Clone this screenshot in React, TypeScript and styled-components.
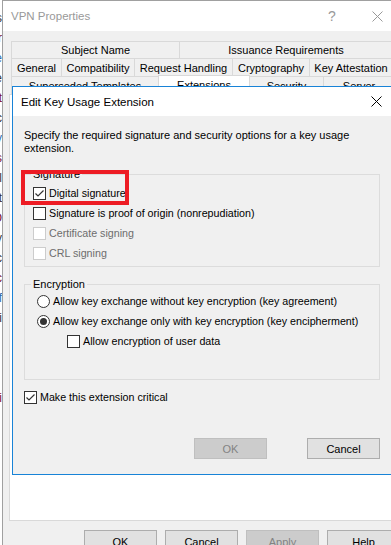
import styled, { createGlobalStyle } from "styled-components";

const GlobalStyle = createGlobalStyle`
    html, body {
        margin: 0;
        padding: 0;
        background: #ffffff;
    }
    body {
        font-family: "Liberation Sans", Arial, sans-serif;
        font-size: 11px;
        color: #000000;
    }
`;

const Screen = styled.div`
    display: flex;
    width: 391px;
    height: 545px;
    overflow: hidden;
`;

// what peeks out of the window behind
const BackStrip = styled.div`
    width: 2px;
    flex: none;
    overflow: hidden;
    direction: rtl;
    padding-top: 8px;
    line-height: 20px;
    font-size: 12px;
    span {
        display: block;
        white-space: nowrap;
    }
`;

const Window = styled.div`
    position: relative;
    flex: none;
    width: 400px;
    height: 570px;
    border-left: 1px solid #a0a0a0;
    border-top: 1px solid #a0a0a0;
    background: #f0f0f0;
    display: flex;
    flex-direction: column;
`;

const TitleBar = styled.div`
    height: 30px;
    background: #ffffff;
    display: flex;
    align-items: center;
    padding-left: 8px;
    font-size: 11.5px;
`;

const WindowTitle = styled.span<{ $active?: boolean }>`
    color: ${p => (p.$active ? "#000000" : "#999999")};
    flex: 1;
`;

const TitleButton = styled.span<{ $w: number }>`
    width: ${p => p.$w}px;
    display: flex;
    align-items: center;
    justify-content: center;
    color: #999999;
    font-size: 14px;
`;

const SheetBody = styled.div`
    padding: 10px 0 0 6px;
    display: flex;
    flex-direction: column;
`;

const TabRow = styled.div<{ $h: number }>`
    display: flex;
    height: ${p => p.$h}px;
    margin-left: 2px;
    align-items: flex-end;
`;

const Tab = styled.div<{ $w: number; $active?: boolean }>`
    box-sizing: border-box;
    width: ${p => p.$w}px;
    flex: none;
    height: ${p => (p.$active ? "calc(100% + 1px)" : "100%")};
    margin-left: -1px;
    border: 1px solid #d9d9d9;
    border-bottom: none;
    background: ${p => (p.$active ? "#ffffff" : "#f0f0f0")};
    display: flex;
    justify-content: center;
    align-items: center;
    white-space: nowrap;
    overflow: hidden;
    &:first-child {
        margin-left: 0;
    }
`;

const TabPage = styled.div`
    height: 427px;
    box-sizing: border-box;
    background: #ffffff;
    border: 1px solid #d9d9d9;
`;

const SheetButtons = styled.div`
    display: flex;
    gap: 8px;
    padding: 9px 0 0 75px;
`;

const Button = styled.button<{ $disabled?: boolean }>`
    width: 73px;
    height: 23px;
    flex: none;
    box-sizing: border-box;
    font: inherit;
    padding: 0;
    color: ${p => (p.$disabled ? "#838383" : "#000000")};
    background: ${p => (p.$disabled ? "#cccccc" : "#e1e1e1")};
    border: 1px solid ${p => (p.$disabled ? "#bfbfbf" : "#adadad")};
    border-radius: 0;
`;

// the modal that sits over the property sheet
const Dialog = styled.div`
    position: absolute;
    left: 9px;
    top: 85px;
    width: 382px;
    height: 387px;
    border: 1px solid #1883d7;
    background: #f0f0f0;
    display: flex;
    flex-direction: column;
`;

const DialogTitle = styled.div`
    height: 29px;
    flex: none;
    background: #ffffff;
    display: flex;
    align-items: center;
    padding-left: 8px;
    font-size: 11.5px;
`;

const DialogBody = styled.div`
    position: relative;
    padding: 13px 15px 0 11px;
    display: flex;
    flex-direction: column;
`;

const Description = styled.p`
    margin: 0;
    line-height: 13px;
    width: 340px;
`;

const GroupBox = styled.fieldset<{ $top: number; $bottom: number }>`
    margin: ${p => p.$top}px 0 0 0;
    padding: 0 0 ${p => p.$bottom}px 0;
    border: 1px solid #dcdcdc;
    min-width: 0;
`;

const Legend = styled.legend`
    margin-left: 6px;
    padding: 0 2px;
    line-height: 14px;
`;

const OptionRow = styled.label<{ $indent: number; $disabled?: boolean }>`
    display: flex;
    align-items: center;
    gap: 3px;
    height: 20px;
    padding-left: ${p => p.$indent}px;
    color: ${p => (p.$disabled ? "#6d6d6d" : "#000000")};
    white-space: nowrap;
    font-size: 10.7px;
`;

const Box = styled.span<{ $disabled?: boolean }>`
    width: 13px;
    height: 13px;
    box-sizing: border-box;
    flex: none;
    background: #ffffff;
    border: 1px solid ${p => (p.$disabled ? "#cccccc" : "#333333")};
    display: flex;
    align-items: center;
    justify-content: center;
`;

const Radio = styled.span<{ $checked?: boolean }>`
    width: 13px;
    height: 13px;
    box-sizing: border-box;
    flex: none;
    border-radius: 50%;
    background: #ffffff;
    border: 1px solid #333333;
    display: flex;
    align-items: center;
    justify-content: center;
    &::after {
        content: "";
        width: 7px;
        height: 7px;
        border-radius: 50%;
        background: ${p => (p.$checked ? "#333333" : "transparent")};
    }
`;

const DialogButtons = styled.div`
    display: flex;
    justify-content: flex-end;
    gap: 40px;
    margin-top: 31px;
    button {
        height: 21px;
    }
`;

const Highlight = styled.div`
    position: absolute;
    left: 8px;
    top: 54px;
    width: 108px;
    height: 35px;
    box-sizing: border-box;
    border: 4px solid #ed1c24;
    pointer-events: none;
`;

function CloseIcon({ color }: { color: string }) {
    return (
        <svg width="11" height="11" viewBox="0 0 11 11">
            <path d="M0.5 0.5 L10.5 10.5 M10.5 0.5 L0.5 10.5" stroke={color} strokeWidth="1" fill="none" />
        </svg>
    );
}

function CheckBox({ checked, disabled }: { checked?: boolean; disabled?: boolean }) {
    return (
        <Box $disabled={disabled}>
            {checked && (
                <svg width="11" height="11" viewBox="0 0 11 11">
                    <polyline points="1.5,5.5 4,8 9.5,2.5" stroke="#333333" strokeWidth="1.2" fill="none" />
                </svg>
            )}
        </Box>
    );
}

const backLetters = ["s", "r", "e", "e", "t", "c", "v", "s", "l", "t", "O", "v", "c", "c", "f", "i", "", "", "", "i"];

function App() {
    return (
        <Screen>
            <GlobalStyle />
            <BackStrip>
                {backLetters.map((l, i) => (
                    <span key={i} style={{ color: i % 3 === 1 ? "#7a1030" : i % 4 === 2 ? "#2b6cb0" : "#333" }}>
                        {l || "\u00a0"}
                    </span>
                ))}
            </BackStrip>
            <Window>
                <TitleBar>
                    <WindowTitle>VPN Properties</WindowTitle>
                    <TitleButton $w={38}>?</TitleButton>
                    <TitleButton $w={52}>
                        <CloseIcon color="#999999" />
                    </TitleButton>
                </TitleBar>
                <SheetBody>
                    <TabRow $h={17}>
                        <Tab $w={169}>Subject Name</Tab>
                        <Tab $w={214}>Issuance Requirements</Tab>
                    </TabRow>
                    <TabRow $h={18}>
                        <Tab $w={51}>General</Tab>
                        <Tab $w={74}>Compatibility</Tab>
                        <Tab $w={99}>Request Handling</Tab>
                        <Tab $w={78}>Cryptography</Tab>
                        <Tab $w={84}>Key Attestation</Tab>
                    </TabRow>
                    <TabRow $h={18}>
                        <Tab $w={148}>Superseded Templates</Tab>
                        <Tab $w={92} $active>Extensions</Tab>
                        <Tab $w={75}>Security</Tab>
                        <Tab $w={72}>Server</Tab>
                    </TabRow>
                    <TabPage />
                    <SheetButtons>
                        <Button>OK</Button>
                        <Button>Cancel</Button>
                        <Button $disabled>Apply</Button>
                        <Button>Help</Button>
                    </SheetButtons>
                </SheetBody>

                <Dialog>
                    <DialogTitle>
                        <WindowTitle $active>Edit Key Usage Extension</WindowTitle>
                        <TitleButton $w={38}>
                            <CloseIcon color="#000000" />
                        </TitleButton>
                    </DialogTitle>
                    <DialogBody>
                        <Description>
                            Specify the required signature and security options for a key usage extension.
                        </Description>

                        <GroupBox $top={12} $bottom={3}>
                            <Legend>Signature</Legend>
                            <div style={{ height: 2 }} />
                            <OptionRow $indent={8}>
                                <CheckBox checked />
                                Digital signature
                            </OptionRow>
                            <OptionRow $indent={8}>
                                <CheckBox />
                                Signature is proof of origin (nonrepudiation)
                            </OptionRow>
                            <OptionRow $indent={8} $disabled>
                                <CheckBox disabled />
                                Certificate signing
                            </OptionRow>
                            <OptionRow $indent={8} $disabled>
                                <CheckBox disabled />
                                CRL signing
                            </OptionRow>
                        </GroupBox>

                        <GroupBox $top={10} $bottom={28}>
                            <Legend>Encryption</Legend>
                            <OptionRow $indent={12}>
                                <Radio />
                                Allow key exchange without key encryption (key agreement)
                            </OptionRow>
                            <OptionRow $indent={12}>
                                <Radio $checked />
                                Allow key exchange only with key encryption (key encipherment)
                            </OptionRow>
                            <OptionRow $indent={42}>
                                <CheckBox />
                                Allow encryption of user data
                            </OptionRow>
                        </GroupBox>

                        <OptionRow $indent={0} style={{ marginTop: 7 }}>
                            <CheckBox checked />
                            Make this extension critical
                        </OptionRow>

                        <DialogButtons>
                            <Button $disabled>OK</Button>
                            <Button>Cancel</Button>
                        </DialogButtons>

                        <Highlight />
                    </DialogBody>
                </Dialog>
            </Window>
        </Screen>
    );
}

export default App;
